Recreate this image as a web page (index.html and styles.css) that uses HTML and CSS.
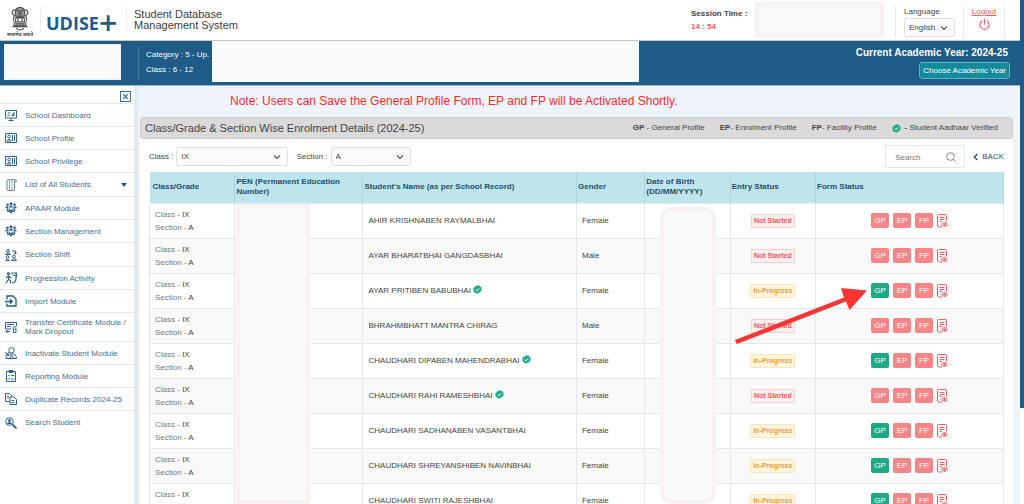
FILE: index.html
```html
<!DOCTYPE html>
<html lang="en">
<head>
<meta charset="utf-8">
<title>UDISE+ Student Database Management System</title>
<link rel="stylesheet" href="styles.css">
</head>
<body>
<svg class="defs" aria-hidden="true">
  <symbol id="tick" viewBox="0 0 20 20"><path fill="#22a98a" d="M10 0l2.6 1.7 3.1-.2 1.2 2.9 2.5 1.8-.8 3 .8 3-2.5 1.8-1.2 2.9-3.1-.2L10 20l-2.6-2.3-3.1.2-1.2-2.9-2.5-1.8.8-3-.8-3 2.5-1.8 1.2-2.9 3.1.2z"/><path fill="none" stroke="#fff" stroke-width="2" d="M6 10l3 3 5-6"/></symbol>
  <symbol id="view" viewBox="0 0 11 14"><g fill="none" stroke="#ee5f64"><path d="M9.500 7.500V1.500a1 1 0 0 0-1-1h-7a1 1 0 0 0-1 1V12l1 1H5M2.500 3.500h5M2.500 5.500h5M2.500 7.500H5"/><path fill="#fff" d="M4.500 10.500q3.200-4 6.200 0q-3 4-6.200 0z"/></g><circle cx="7.600" cy="10.500" r="1.200" fill="#ee5f64"/></symbol>
  <symbol id="chev" viewBox="0 0 8 8"><path d="M1 2.500l3 3 3-3" fill="none" stroke="#555" stroke-width="1.200"/></symbol>
  <symbol id="i-dash" viewBox="0 0 12 12"><g fill="none" stroke="#2d6390"><path d="M.5 1.500h11v7.500H.500zM6 9v2M3.500 11.500h5"/><path d="M2.500 4h3M2.500 6.500h2M7 6.500l2-3v3z"/></g></symbol>
  <symbol id="i-card" viewBox="0 0 12 12"><g fill="none" stroke="#2d6390"><path d="M.5 1.500h11v9H.500z"/><circle cx="4" cy="4.500" r="1.400"/><path d="M1.800 9q2.200-3.500 4.400 0M7.500 3v6M9.500 3v6M2 9h4"/></g></symbol>
  <symbol id="i-list" viewBox="0 0 12 12"><g fill="none" stroke="#2d6390" stroke-width=".8"><path d="M2.500 .8H10q1.500 0 1.500 1.700H9.500V10.500q0 1-1 1H3q-1-.500-1-1.500V1.500z"/><path d="M4.500 1.500v9.500M7 1.500v9.500" stroke-dasharray="1 .6"/></g></symbol>
  <symbol id="i-group" viewBox="0 0 12 12"><g fill="#2d6390"><circle cx="6" cy="1.700" r="1.500"/><circle cx="2.500" cy="2.800" r="1.300"/><circle cx="9.500" cy="2.800" r="1.300"/><path d="M3.500 5.500q2.500-4 5 0zM0 6.200q1-3 3.500-1.500l-.500 1.500zM12 6.200q-1-3-3.500-1.500l.5 1.500z"/></g><path d="M2 6.500l1 3 2-.300L6 11l1-1.800 2 .3 1-3M4 6.500a2 2 0 0 0 4 0" fill="none" stroke="#2d6390" stroke-width="1.200"/></symbol>
  <symbol id="i-shift" viewBox="0 0 12 12"><g fill="none" stroke="#2d6390"><circle cx="3" cy="1.900" r="1.400"/><path d="M.5 5.500q2.500-3.500 5 0z"/><circle cx="2.500" cy="8" r="1.300"/><path d="M.5 11.500q2-3 4 0z"/><circle cx="9" cy="7.500" r="1.400"/><path d="M6.500 11.500q2.500-4 5 0zM7 2h3.500v3M9 4l1.500 1L11.800 3.500"/></g></symbol>
  <symbol id="i-prog" viewBox="0 0 12 12"><g fill="none" stroke="#2d6390" stroke-width="1.200"><circle cx="3.500" cy="1.700" r="1"/><path d="M3.500 3.200v4l-2.500 4M3.500 7l2 2v2.500M.8 6L3.500 4l2.500 2M7 2.500V1h4.500v4M11 1.500v5q0 4-4 4.500M8 3.500h2"/></g></symbol>
  <symbol id="i-import" viewBox="0 0 12 12"><g fill="none" stroke="#1f5c88" stroke-width="1.300"><path d="M2 4.500V1h6l3 3v7H2V8.500"/><path d="M0 6.500h7M5 4.300l2.300 2.200L5 8.700"/></g></symbol>
  <symbol id="i-cert" viewBox="0 0 12 12"><g fill="none" stroke="#2d6390"><path d="M6 8H.5V1.500h11V5M2 3.500h7M2 5.500h4M1 10.500h4M2.500 9L1 10.500 2.500 12"/><circle cx="9.500" cy="7" r="1.500"/><path d="M8.500 8.500V11.500h2.500V8.500"/></g></symbol>
  <symbol id="i-inact" viewBox="0 0 12 12"><g fill="none" stroke="#2d6390"><circle cx="6.500" cy="3.300" r="2.700"/><path d="M1 11.500q.500-4.500 5.500-4.500t5 4.500zM0 5l4 4M4 5L.5 9M4.500 11.500L6.500 8l2 3.500"/></g></symbol>
  <symbol id="i-report" viewBox="0 0 12 12"><g fill="none" stroke="#2d6390"><path d="M1.500 1.500h9v10h-9zM4 .5h4v2H4zM3 5l.8.800L5 4.500M6 5.500h3M3 8.500l.8.800L5 8M6 9h3"/></g></symbol>
  <symbol id="i-dup" viewBox="0 0 12 12"><g fill="none" stroke="#2d6390"><path d="M5 8.500H.5V.5h4l2 2V4M5 4h4l2.500 2.500v5H5zM2 3h2M2 5h2M6.500 7.500h3M6.500 9.500h3"/></g></symbol>
  <symbol id="i-search" viewBox="0 0 12 12"><g fill="none" stroke="#2d6390"><circle cx="4.500" cy="4.500" r="3.800"/><path d="M7.500 7.500l4 4" stroke-width="1.800"/><circle cx="4.500" cy="3.500" r="1.100" fill="#2d6390"/><path d="M2.500 6.500q2-2.500 4 0z" fill="#2d6390"/></g></symbol>
</svg>

<div class="app">
  <div class="page">
    <header class="top">
      <div class="emblem">
        <svg viewBox="0 0 20 25" aria-hidden="true"><g fill="none" stroke="#4a4a4a" stroke-width="1.200"><path d="M6 2q4-3 8 0l1 4-1 5H6L5 6z" fill="#999"/><path d="M7 3l2 2M13 3l-2 2M8 7h4M10 4v8M7 9l3 2 3-2"/><path d="M5 3Q1 3 2 7l2 2-1 5M15 3q4 0 3 4l-2 2 1 5M6 11l-1 4M14 11l1 4M8 11v4M12 11v4"/><path d="M3 15.500h14M4 17.500h12v2H4zM2 20.500h16M6 22q4 4 8 0" /><path d="M10 17v3M7 17v3M13 17v3"/></g></svg>
        <span lang="hi">सत्यमेव जयते</span>
      </div>
      <div class="brand">UDISE<span>+</span></div>
      <div class="product">Student Database<br>Management System</div>
      <div class="session"><b>Session Time :</b><b class="time">14 : 54</b></div>
      <div class="userbox"></div>
      <div class="language">
        <label for="lang">Language</label>
        <span class="pick"><select id="lang"><option>English</option></select><svg><use href="#chev"/></svg></span>
      </div>
      <div class="logout">
        <a href="#">Logout</a>
        <svg viewBox="0 0 12 12" aria-hidden="true"><path d="M3.500 2a5 5 0 1 0 5 0M6 0v6" fill="none" stroke="#f4595d" stroke-width="1.200"/></svg>
      </div>
    </header>

    <div class="band">
      <div class="school"></div>
      <div class="facts">Category : 5 - Up.<br>Class : 6 - 12</div>
      <div class="address"></div>
      <div class="year"><b>Current Academic Year: 2024-25</b><button type="button">Choose Academic Year</button></div>
    </div>

    <div class="body">
      <nav class="side">
        <div class="closebar"><button type="button" aria-label="Close menu"><svg viewBox="0 0 8 8"><path d="M2 2l4 4M6 2L2 6" stroke="#3b6f97" stroke-width="1"/></svg></button></div>
        <a href="#"><svg><use href="#i-dash"/></svg>School Dashboard</a>
        <a href="#"><svg><use href="#i-card"/></svg>School Profile</a>
        <a href="#"><svg><use href="#i-card"/></svg>School Privilege</a>
        <a href="#" class="tall"><svg><use href="#i-list"/></svg>List of All Students<i class="caret"></i></a>
        <a href="#"><svg><use href="#i-group"/></svg>APAAR Module</a>
        <a href="#"><svg><use href="#i-group"/></svg>Section Management</a>
        <a href="#" class="tall"><svg><use href="#i-shift"/></svg>Section Shift</a>
        <a href="#"><svg><use href="#i-prog"/></svg>Progression Activity</a>
        <a href="#"><svg><use href="#i-import"/></svg>Import Module</a>
        <a href="#" class="two"><svg><use href="#i-cert"/></svg>Transfer Certificate Module /<br>Mark Dropout</a>
        <a href="#"><svg><use href="#i-inact"/></svg>Inactivate Student Module</a>
        <a href="#"><svg><use href="#i-report"/></svg>Reporting Module</a>
        <a href="#"><svg><use href="#i-dup"/></svg>Duplicate Records 2024-25</a>
        <a href="#" class="last"><svg><use href="#i-search"/></svg>Search Student</a>
      </nav>

      <main class="main">
        <p class="note">Note: Users can Save the General Profile Form, EP and FP will be Activated Shortly.</p>
        <section class="card">
          <div class="title">
            <h1>Class/Grade &amp; Section Wise Enrolment Details (2024-25)</h1>
            <ul class="legend">
              <li><b>GP</b> - General Profile</li>
              <li><b>EP</b>- Enrolment Profile</li>
              <li><b>FP</b>- Facility Profile</li>
              <li class="verified"><svg><use href="#tick"/></svg><span><b>-</b> Student Aadhaar Verified</span></li>
            </ul>
          </div>
          <div class="filters">
            <label for="cls">Class :</label>
            <span class="pick wide"><select id="cls"><option>IX</option></select><svg><use href="#chev"/></svg></span>
            <label for="sec">Section :</label>
            <span class="pick mid"><select id="sec"><option>A</option></select><svg><use href="#chev"/></svg></span>
            <span class="search"><input type="text" placeholder="Search" aria-label="Search"><svg viewBox="0 0 10 10"><g fill="none" stroke="#8a8a8a"><circle cx="4.500" cy="4.500" r="3.900"/><path d="M7.300 7.300L9.500 9.500"/></g></svg></span>
            <a href="#" class="back"><svg viewBox="0 0 5 8"><path d="M4.500 1L1.200 4l3.300 3" fill="none" stroke="#1c4f7b" stroke-width="1.300"/></svg>BACK</a>
          </div>
          <div class="tablewrap">
            <table>
              <colgroup><col class="w10"><col class="w15"><col class="w25"><col class="w8"><col class="w10"><col class="w10"><col class="w22"></colgroup>
              <thead><tr><th>Class/Grade</th><th>PEN (Permanent Education<br>Number)</th><th>Student's Name (as per School Record)</th><th>Gender</th><th>Date of Birth (DD/MM/YYYY)</th><th>Entry Status</th><th>Form Status</th></tr></thead>
              <tbody>
                <tr><td>Class - <b>IX</b><br>Section - <b>A</b></td><td></td><td>AHIR KRISHNABEN RAYMALBHAI</td><td>Female</td><td></td><td><span class="tag no">Not Started</span></td><td><div class="forms"><button>GP</button><button>EP</button><button>FP</button><svg><use href="#view"/></svg></div></td></tr>
                <tr><td>Class - <b>IX</b><br>Section - <b>A</b></td><td></td><td>AYAR BHARATBHAI GANGDASBHAI</td><td>Male</td><td></td><td><span class="tag no">Not Started</span></td><td><div class="forms"><button>GP</button><button>EP</button><button>FP</button><svg><use href="#view"/></svg></div></td></tr>
                <tr><td>Class - <b>IX</b><br>Section - <b>A</b></td><td></td><td>AYAR PRITIBEN BABUBHAI <svg class="ok"><use href="#tick"/></svg></td><td>Female</td><td></td><td><span class="tag">In-Progress</span></td><td><div class="forms"><button class="done">GP</button><button>EP</button><button>FP</button><svg><use href="#view"/></svg></div></td></tr>
                <tr><td>Class - <b>IX</b><br>Section - <b>A</b></td><td></td><td>BHRAHMBHATT MANTRA CHIRAG</td><td>Male</td><td></td><td><span class="tag no">Not Started</span></td><td><div class="forms"><button>GP</button><button>EP</button><button>FP</button><svg><use href="#view"/></svg></div></td></tr>
                <tr><td>Class - <b>IX</b><br>Section - <b>A</b></td><td></td><td>CHAUDHARI DIPABEN MAHENDRABHAI <svg class="ok"><use href="#tick"/></svg></td><td>Female</td><td></td><td><span class="tag">In-Progress</span></td><td><div class="forms"><button class="done">GP</button><button>EP</button><button>FP</button><svg><use href="#view"/></svg></div></td></tr>
                <tr><td>Class - <b>IX</b><br>Section - <b>A</b></td><td></td><td>CHAUDHARI RAHI RAMESHBHAI <svg class="ok"><use href="#tick"/></svg></td><td>Female</td><td></td><td><span class="tag no">Not Started</span></td><td><div class="forms"><button>GP</button><button>EP</button><button>FP</button><svg><use href="#view"/></svg></div></td></tr>
                <tr><td>Class - <b>IX</b><br>Section - <b>A</b></td><td></td><td>CHAUDHARI SADHANABEN VASANTBHAI</td><td>Female</td><td></td><td><span class="tag">In-Progress</span></td><td><div class="forms"><button class="done">GP</button><button>EP</button><button>FP</button><svg><use href="#view"/></svg></div></td></tr>
                <tr><td>Class - <b>IX</b><br>Section - <b>A</b></td><td></td><td>CHAUDHARI SHREYANSHIBEN NAVINBHAI</td><td>Female</td><td></td><td><span class="tag">In-Progress</span></td><td><div class="forms"><button class="done">GP</button><button>EP</button><button>FP</button><svg><use href="#view"/></svg></div></td></tr>
                <tr><td>Class - <b>IX</b><br>Section - <b>A</b></td><td></td><td>CHAUDHARI SWITI RAJESHBHAI</td><td>Female</td><td></td><td><span class="tag">In-Progress</span></td><td><div class="forms"><button class="done">GP</button><button>EP</button><button>FP</button><svg><use href="#view"/></svg></div></td></tr>
              </tbody>
            </table>
            <div class="mask pen"></div>
            <div class="mask dob"></div>
            <svg class="arrow" viewBox="0 0 132 58" aria-hidden="true"><path d="M0 53l109-42.500L106 1l26 2.500L114.500 23l-3.500-8.500L1.700 57z" fill="#fa3534"/></svg>
          </div>
        </section>
      </main>
    </div>
  </div>
  <div class="rail"><div class="thumb"></div></div>
</div>
</body>
</html>
```
FILE: styles.css
```css
* { box-sizing: border-box; }
body { margin: 0; font: 8px/12px "Liberation Sans", Arial, sans-serif; color: #444; background: #fff; }
a { text-decoration: none; color: inherit; }
button, select, input { font: inherit; color: inherit; margin: 0; }
.defs { position: absolute; width: 0; height: 0; }

.app { display: flex; height: 100vh; overflow: hidden; }
.page { flex: 1; min-width: 0; display: flex; flex-direction: column; }
.rail { width: 4px; background: #fff; }
.thumb { height: 81%; background: #1e5b87; }

.top { display: flex; align-items: center; height: 41px; flex: none; border-bottom: 1px solid #c8c8c8; }
.emblem { width: 40px; padding-top: 4px; display: flex; flex-direction: column; align-items: center; }
.emblem svg { width: 20px; height: 24px; }
.emblem span { font: bold 5px/6px "Noto Sans", sans-serif; }
.brand { display: flex; align-items: center; height: 30px; width: 87px; padding: 5px 0 0 5px; border: solid #eee; border-width: 0 1px; font: bold 18px/28px "Open Sans", sans-serif; color: #1f5a8c; }
.brand span { font-size: 32px; font-weight: 600; }
.product { flex: 1; padding-left: 7px; font-size: 11px; line-height: 11px; color: #3c3c3c; }
.session { width: 64px; display: flex; flex-direction: column; }
.session b { line-height: 13px; }
.session .time { color: #f4595d; }
.userbox { width: 129px; height: 36px; border: 4px solid #f7f3f3; background: #fbfafa; }
.language { margin-left: 11px; height: 32px; margin-top: 4px; padding: 0 8px; border: solid #e7e7e7; border-width: 0 1px; display: flex; flex-direction: column; }
.logout { width: 41px; height: 32px; margin: 4px 15px 0 0; border-right: 1px solid #e7e7e7; display: flex; flex-direction: column; align-items: center; gap: 1px; }
.logout a { color: #f4595d; text-decoration: underline; }
.logout svg { width: 11px; height: 11px; }

.pick { position: relative; display: block; width: 51px; height: 19px; }
.pick select { appearance: none; width: 100%; height: 100%; padding: 0 4px; border: 1px solid #dcdfe2; border-radius: 3px; background: #fbfbfb; }
.pick svg { position: absolute; right: 7px; top: 6px; width: 8px; height: 8px; pointer-events: none; }
.pick.wide { width: 112px; }
.pick.mid { width: 80px; }

.band { display: flex; height: 45px; flex: none; padding-left: 4px; background: #1e5b87; color: #fff; border-bottom: 1px solid #9eb4c8; }
.school { width: 117px; height: 36px; margin-top: 3px; border: 1px solid #f2eeee; background: #fbfafa; }
.facts { width: 74px; margin: 6px 0 5px 17px; padding-left: 7px; border-left: 1px dotted #6c96b3; line-height: 15px; white-space: nowrap; }
.address { flex: 0 1 427px; height: 41px; background: #fbfafa; }
.year { flex: 1; padding: 5px 10px 0 0; display: flex; flex-direction: column; align-items: flex-end; gap: 2px; white-space: nowrap; }
.year b { font-size: 10px; line-height: 14px; padding-right: 2px; }
.year button { height: 17px; padding: 0 3px; border: 1px solid #5fb3bd; border-radius: 3px; background: #148a9c; color: #fff; }

.body { flex: 1; min-height: 0; display: flex; background: #eff4fa; }
.side { width: 134px; flex: none; background: #fff; color: #42708f; line-height: 9px; box-shadow: 4px 0 0 #e3ebef; }
.closebar { display: flex; justify-content: flex-end; height: 18px; padding: 5px 3px 0 0; border-bottom: 1px solid #e0e9ee; }
.closebar button { width: 11px; height: 11px; padding: 0; border: 1px solid #3b6f97; background: #fff; display: flex; }
.side a { display: flex; align-items: center; height: 23px; padding-left: 5px; gap: 8px; border-bottom: 1px solid #e0e9ee; }
.side a svg { width: 12px; height: 12px; flex: none; }
.side .tall { height: 24px; }
.side .two { height: 29px; }
.side .last { border: 0; }
.caret { margin-left: auto; margin-right: 7px; border: solid transparent; border-width: 4px 3px 0; border-top-color: #1f5c88; }

.main { flex: 1; min-width: 0; padding: 0 7px 0 6px; overflow: hidden; }
.note { margin: 0 0 0 90px; font-size: 12px; line-height: 31px; color: #fb2a2e; }
.card { background: #fff; }
.title { display: flex; align-items: center; justify-content: space-between; height: 22px; padding: 0 14px 0 4px; border: 1px solid #ccc; border-radius: 3px; background: #dadada; }
.title h1 { margin: 0; font-size: 11px; font-weight: normal; }
.legend { display: flex; gap: 15px; margin: 0; padding: 0; list-style: none; }
.verified { display: flex; align-items: center; gap: 4px; }
.verified svg { width: 9px; height: 9px; }
.filters { display: flex; align-items: center; height: 33px; padding: 2px 9px 0; gap: 3px; }
.filters .wide { margin-right: 5px; }
.search { position: relative; margin-left: auto; width: 80px; height: 23px; }
.search input { width: 100%; height: 100%; padding: 2px 9px 0; border: 1px solid #e6e6e6; border-radius: 2px; }
.search svg { position: absolute; right: 9px; top: 7px; width: 10px; height: 10px; }
.back { display: flex; align-items: center; gap: 4px; margin-left: 5px; color: #1c4f7b; }
.back svg { width: 5px; height: 8px; }

.tablewrap { position: relative; padding: 0 9px; }
table { width: 100%; border-collapse: collapse; table-layout: fixed; }
.w8 { width: 8%; } .w10 { width: 10%; } .w15 { width: 15%; } .w22 { width: 22%; } .w25 { width: 25%; }
th { height: 31px; padding: 0 1px; text-align: left; line-height: 10px; color: #1f4d6b; background: #bee5eb; border-right: 1px dotted #9cc5cf; }
th:first-child { padding-left: 3px; }
td { height: 35px; padding: 0 5px; border: 1px solid #e7e7e7; }
td:nth-child(6), td:nth-child(7) { text-align: center; }
td:first-child { color: #777; line-height: 13px; }
td b { color: #444; font-weight: normal; }
tr:nth-child(even) td { background: #f9f9f9; }
.ok { width: 9px; height: 9px; vertical-align: -1px; }
.tag { display: inline-block; height: 14px; padding: 0 2px; border: 1px solid #fbe7b8; border-radius: 1px; background: #fff4dc; color: #f29c38; font-size: 7px; font-weight: bold; }
.tag.no { border-color: #f9cfd1; background: #fdeeee; color: #f3585e; }
.forms { display: flex; align-items: center; justify-content: center; gap: 4px; }
.forms button { width: 18px; height: 15px; padding: 0; border: 0; border-radius: 2px; background: #f58586; color: #fff; }
.forms .done { background: #1fa983; }
.forms svg { width: 11px; height: 14px; }

.mask { position: absolute; border: 4px solid #f7f3f3; background: #fbfafa; }
.pen { left: 96px; top: 32px; width: 74px; height: 300px; }
.dob { left: 520px; top: 35px; width: 56px; height: 297px; border-radius: 12px; }
.arrow { position: absolute; left: 595px; top: 115px; width: 132px; height: 58px; }
```
